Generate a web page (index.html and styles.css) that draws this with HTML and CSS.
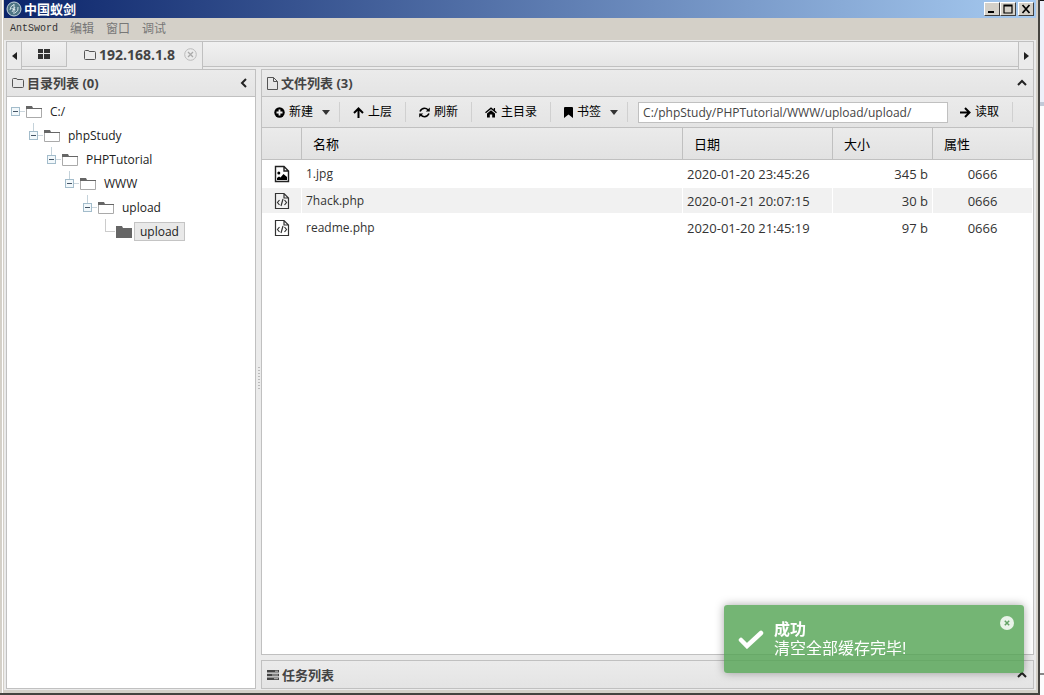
FILE: index.html
```html
<!DOCTYPE html>
<html lang="zh-CN">
<head>
<meta charset="utf-8">
<title>中国蚁剑</title>
<link rel="stylesheet" href="styles.css">
</head>
<body>
<svg class="defs" aria-hidden="true">
  <symbol id="i-folder" viewBox="0 0 12 10"><path d="M.5 8.500v-7q0-1 1-1h2.700q1 0 1 1h5.300q1 0 1 1v6q0 1-1 1h-9q-1 0-1-1z" fill="none" stroke="#555"/></symbol>
  <symbol id="i-dir" viewBox="0 0 16 13"><path d="M.5 12.500v-9h15v9z" fill="#fff" stroke="#aaa"/><path d="M0 4V1h6l1 2h9v1z" fill="#666"/></symbol>
  <symbol id="i-dir-solid" viewBox="0 0 16 13"><path d="M0 13V1h6l1 2h9v10z" fill="#666"/></symbol>
  <symbol id="i-code" viewBox="0 0 16 18"><path d="M1.500 1.500h8.500l4.500 4.500v10.500h-13zM10 1.500V6h4.500" fill="none" stroke="#333" stroke-width="1.200"/><path d="M5.500 8 3.500 10.500l2 2.500M10.500 8l2 2.500-2 2.500M9 7l-2 7" fill="none" stroke="#333" stroke-width="1.200"/></symbol>
  <symbol id="i-image" viewBox="0 0 16 18"><path d="M1.500 1.500h8.500l4.500 4.500v10.500h-13zM10 1.500V6h4.500" fill="none" stroke="#222" stroke-width="1.400"/><circle cx="4.800" cy="8" r="1.500"/><path d="M3 15v-2l2-1.500 1.500 1L9.500 9l3.500 3v3z"/></symbol>
</svg>
<div class="desktop">
  <div class="window">
    <header class="titlebar">
      <svg class="logo" viewBox="0 0 16 16"><circle cx="8" cy="8" r="7" fill="#4d7484" stroke="#c6d5dc"/><path d="M4 9q0-4 4-5.500M12 6q1 4-3 6M8 3v10M5.500 7.500l4 1.500M6 11l3-5" fill="none" stroke="#e3edf0" stroke-width=".9"/></svg>
      <h1 class="title">中国蚁剑</h1>
      <button class="winbtn" aria-label="最小化"><svg viewBox="0 0 12 10"><path d="M2 8h6" stroke="#000" stroke-width="2"/></svg></button>
      <button class="winbtn" aria-label="最大化"><svg viewBox="0 0 12 10"><path d="M2 1h8v8H2zM2 2h8" fill="none" stroke="#000" stroke-width="1.200"/></svg></button>
      <button class="winbtn winbtn-close" aria-label="关闭"><svg viewBox="0 0 12 10"><path d="m2.500 1 7 8m0-8-7 8" stroke="#000" stroke-width="1.700"/></svg></button>
    </header>
    <nav class="menu">
      <button class="menu-item menu-latin">AntSword</button>
      <button class="menu-item">编辑</button>
      <button class="menu-item">窗口</button>
      <button class="menu-item">调试</button>
    </nav>
    <div class="app">
      <div class="tabs">
        <button class="tab-scroll" aria-label="向左"><svg width="5" height="8" viewBox="0 0 5 8"><path d="M5 0v8L0 4z" fill="#222"/></svg></button>
        <button class="tab tab-home" aria-label="主页"><svg width="12" height="10" viewBox="0 0 12 10"><path d="M0 0h5v4H0zM6 0h6v4H6zM0 5h5v5H0zM6 5h6v5H6z" fill="#333"/></svg></button>
        <div class="tab tab-active">
          <svg width="12" height="10"><use href="#i-folder"/></svg>
          <span class="tab-name">192.168.1.8</span>
          <button class="tab-close" aria-label="关闭标签"><svg width="13" height="13" viewBox="0 0 13 13"><circle cx="6.500" cy="6.500" r="5.800" fill="none" stroke="#bbb"/><path d="m4 4 5 5m0-5-5 5" stroke="#aaa" stroke-width="1.300"/></svg></button>
        </div>
        <div class="tab-rest"></div>
        <button class="tab-scroll tab-scroll-right" aria-label="向右"><svg width="5" height="8" viewBox="0 0 5 8"><path d="M0 0v8l5-4z" fill="#222"/></svg></button>
      </div>
      <div class="panes">
        <aside class="pane tree-pane">
          <div class="pane-head">
            <svg width="12" height="10"><use href="#i-folder"/></svg>
            <h2 class="pane-title">目录列表 (0)</h2>
            <button class="collapse" aria-label="折叠"><svg width="8" height="10" viewBox="0 0 8 10"><path d="M6 1 2 5l4 4" fill="none" stroke="#222" stroke-width="2"/></svg></button>
          </div>
          <ul class="tree">
            <li><div class="node"><button class="toggle" aria-label="折叠"></button><svg width="16" height="13"><use href="#i-dir"/></svg><span class="label">C:/</span></div>
              <ul><li><div class="node child"><button class="toggle" aria-label="折叠"></button><svg width="16" height="13"><use href="#i-dir"/></svg><span class="label">phpStudy</span></div>
                <ul><li><div class="node child"><button class="toggle" aria-label="折叠"></button><svg width="16" height="13"><use href="#i-dir"/></svg><span class="label">PHPTutorial</span></div>
                  <ul><li><div class="node child"><button class="toggle" aria-label="折叠"></button><svg width="16" height="13"><use href="#i-dir"/></svg><span class="label">WWW</span></div>
                    <ul><li><div class="node child"><button class="toggle" aria-label="折叠"></button><svg width="16" height="13"><use href="#i-dir"/></svg><span class="label">upload</span></div>
                      <ul><li><div class="node child leaf"><span class="elbow"></span><svg width="16" height="13"><use href="#i-dir-solid"/></svg><span class="label selected">upload</span></div></li></ul>
                    </li></ul>
                  </li></ul>
                </li></ul>
              </li></ul>
            </li>
          </ul>
        </aside>
        <div class="splitter"><span class="grip"></span></div>
        <main class="right">
          <section class="pane file-pane">
            <div class="pane-head">
              <svg width="11" height="13" viewBox="0 0 11 13"><path d="M.5.5h6l4 4v8H.5zM6.500.5v4h4" fill="none" stroke="#555"/></svg>
              <h2 class="pane-title">文件列表 (3)</h2>
              <button class="collapse" aria-label="折叠"><svg width="10" height="8" viewBox="0 0 10 8"><path d="m1 6 4-4 4 4" fill="none" stroke="#222" stroke-width="2"/></svg></button>
            </div>
            <div class="toolbar">
              <button class="tool"><svg width="11" height="11" viewBox="0 0 11 11"><circle cx="5.500" cy="5.500" r="5.200"/><path d="M5.500 2.500v6M2.500 5.500h6" stroke="#eee" stroke-width="1.800"/></svg>新建<span class="caret"></span></button>
              <button class="tool"><svg width="11" height="11" viewBox="0 0 11 11"><path d="M5.500 11V2M1 6l4.500-4.500L10 6" fill="none" stroke="#000" stroke-width="2"/></svg>上层</button>
              <button class="tool"><svg width="11" height="11" viewBox="0 0 11 11"><path d="M1 4.500q1.500-3.200 4.500-3.200 2 0 3.700 1.700M10 6.500Q8.500 9.700 5.500 9.700q-2 0-3.700-1.700" fill="none" stroke="#000" stroke-width="1.600"/><path d="M10.800.5v4h-4zM.2 10.500v-4h4z"/></svg>刷新</button>
              <button class="tool"><svg width="12" height="11" viewBox="0 0 12 11"><path d="m.5 5.800 5.500-4.600 5.500 4.600M9.400 1v3" fill="none" stroke="#000" stroke-width="1.300"/><path d="M2 6.500 6 3.200l4 3.300V10.500H7.200v-3H4.800v3H2z"/></svg>主目录</button>
              <button class="tool"><svg width="9" height="11" viewBox="0 0 9 11"><path d="M0 1q0-1 1-1h7q1 0 1 1v10L4.500 7.500 0 11z"/></svg>书签<span class="caret"></span></button>
              <input class="path" type="text" aria-label="路径" value="C:/phpStudy/PHPTutorial/WWW/upload/upload/">
              <button class="tool"><svg width="11" height="11" viewBox="0 0 11 11"><path d="M0 5.500h9M5 1l4.500 4.500L5 10" fill="none" stroke="#000" stroke-width="2"/></svg>读取</button>
            </div>
            <table class="files">
              <colgroup><col class="c-icon"><col><col class="c-date"><col class="c-size"><col class="c-attr"></colgroup>
              <thead><tr><th></th><th>名称</th><th>日期</th><th>大小</th><th>属性</th></tr></thead>
              <tbody>
                <tr><td class="icon"><svg width="16" height="18"><use href="#i-image"/></svg></td><td class="name">1.jpg</td><td>2020-01-20 23:45:26</td><td class="num">345 b</td><td class="mid">0666</td></tr>
                <tr><td class="icon"><svg width="16" height="18"><use href="#i-code"/></svg></td><td class="name">7hack.php</td><td>2020-01-21 20:07:15</td><td class="num">30 b</td><td class="mid">0666</td></tr>
                <tr><td class="icon"><svg width="16" height="18"><use href="#i-code"/></svg></td><td class="name">readme.php</td><td>2020-01-20 21:45:19</td><td class="num">97 b</td><td class="mid">0666</td></tr>
              </tbody>
            </table>
          </section>
          <section class="pane task-pane">
            <div class="pane-head">
              <svg width="12" height="10" viewBox="0 0 12 10"><path d="M0 0h12v2.500H0zM0 3.700h12v2.600H0zM0 7.500h12V10H0z" fill="#444"/><path d="M8 1.200h3M5 5h6M7 8.700h4" stroke="#bbb"/></svg>
              <h2 class="pane-title">任务列表</h2>
              <button class="collapse" aria-label="展开"><svg width="10" height="8" viewBox="0 0 10 8"><path d="m1 6 4-4 4 4" fill="none" stroke="#222" stroke-width="2"/></svg></button>
            </div>
          </section>
        </main>
      </div>
    </div>
  </div>
  <div class="outside"><div class="outside-top"></div><div class="outside-mid"></div><div class="outside-low"></div></div>
</div>
<div class="toast" role="status">
  <svg class="toast-check" width="26" height="20" viewBox="0 0 26 20"><path d="m3 11 6 6L23 4" fill="none" stroke="#fff" stroke-width="4.500" stroke-linecap="round"/></svg>
  <div class="toast-text"><strong>成功</strong><span>清空全部缓存完毕!</span></div>
  <button class="toast-close" aria-label="关闭"><svg width="14" height="14" viewBox="0 0 14 14"><circle cx="7" cy="7" r="7" fill="#e9f3e9"/><path d="m4.800 4.800 4.400 4.400m0-4.400L4.800 9.200" stroke="#63a266" stroke-width="1.500"/></svg></button>
</div>
</body>
</html>
```
FILE: styles.css
```css
* { box-sizing: border-box; }
html, body { height: 100%; margin: 0; }
body {
  font: 13px/18px "Open Sans", "Noto Sans CJK SC", sans-serif;
  color: #333;
  overflow: hidden;
}
button {
  margin: 0; padding: 0; border: 0; background: none;
  font: inherit; color: inherit;
  display: flex; align-items: center; justify-content: center;
}
h1, h2, ul { margin: 0; padding: 0; }
ul { list-style: none; }
svg { flex: none; display: block; }
.defs { position: absolute; width: 0; height: 0; }

.desktop { display: flex; height: 100vh; background: #fff; }
.window {
  flex: 1; min-width: 0;
  display: flex; flex-direction: column;
  background: #d4d0c8;
  border-right: 2px solid #45433f;
  border-bottom: 2px solid #45433f;
  padding: 0 2px 3px 4px;
  box-shadow: inset 2px 0 #d4d0c8, inset 3px 0 #fff;
}
.outside { width: 4px; display: flex; flex-direction: column; background: #fcfcfd; }
.outside-top { height: 102px; background: #eef0fa; border-top: 1px solid #111; }
.outside-mid { height: 573px; border-top: 4px solid #c3cad8; border-bottom: 2px solid #888; }
.outside-low { flex: 1; }

.titlebar {
  display: flex; align-items: center; height: 18px; padding: 0 2px;
  background: linear-gradient(90deg, #0b246a, #a6caf0);
}
.logo { width: 16px; height: 16px; }
.title { flex: 1; margin-left: 2px; font-size: 13px; line-height: 18px; font-weight: 700; color: #fff; }
.winbtn {
  width: 16px; height: 14px; background: #d4d0c8;
  border: 1px solid; border-color: #fff #404040 #404040 #fff;
}
.winbtn svg { width: 12px; height: 10px; }
.winbtn-close { margin-left: 2px; }

.menu { display: flex; gap: 12px; height: 22px; padding: 0 6px; }
.menu-item { font-size: 12px; color: #777; }
.menu-latin { font-family: "Liberation Mono", monospace; font-size: 10px; color: #333; }

.app {
  flex: 1; min-height: 0; display: flex; flex-direction: column;
  padding: 1px 2px;
  background: #ebebeb;
}
.tabs { display: flex; height: 28px; border: 1px solid #c0c0c0; border-bottom: 0; background: #ebebeb; }
.tab-scroll { width: 15px; border-right: 1px solid #c0c0c0; }
.tab-scroll-right { border-right: 0; border-left: 1px solid #c0c0c0; }
.tab, .tab-rest { background: linear-gradient(#f1f1f1, #e5e5e5); }
.tab { border-right: 1px solid #c0c0c0; }
.tab-home { width: 45px; height: 25px; border-bottom: 1px solid #c0c0c0; }
.tab-active { display: flex; align-items: center; width: 136px; padding: 0 5px 2px 17px; background: #ebebeb; }
.tab-name { flex: 1; margin-left: 3px; font-weight: 700; font-size: 14px; color: #444; }
.tab-rest { flex: 1; height: 25px; border-bottom: 1px solid #c0c0c0; }

.panes { flex: 1; min-height: 0; display: flex; }
.pane { border: 1px solid #c0c0c0; background: #fff; }
.pane-head {
  display: flex; align-items: center; gap: 3px; height: 27px; padding: 0 5px;
  background: linear-gradient(#ebebeb, #e4e4e4);
}
.pane-title { flex: 1; font-size: 13px; line-height: 18px; font-weight: 700; color: #444; }
.collapse { width: 12px; height: 12px; }

.tree-pane { width: 250px; }
.tree-pane .pane-head, .file-pane .pane-head { border-bottom: 1px solid #c0c0c0; }
.tree { padding: 2px 4px; }
.tree ul { padding-left: 18px; }
.node { display: flex; align-items: center; height: 24px; font-size: 12px; color: #222; position: relative; }
.toggle { width: 9px; height: 9px; border: 1px solid #a3bccb; background: #f2f8fb; position: relative; }
.toggle::before { content: ""; width: 5px; height: 1px; background: #456; }
.toggle::after { content: ""; position: absolute; left: 8px; top: 3px; width: 5px; height: 1px; background: #cbd6dd; }
.node svg { margin-left: 6px; }
.label { margin-left: 2px; padding: 0 5px; line-height: 17px; border: 1px solid transparent; }
.selected { background: #e9e9e9; border-color: #c4c4c4; }
.child::before { content: ""; position: absolute; left: 4px; top: 0; width: 1px; height: 8px; background: #c4d2da; }
.leaf::before { height: 12px; background: #ccc; }
.elbow { width: 14px; height: 1px; margin-right: -5px; background: linear-gradient(90deg, transparent 4px, #ccc 4px); }

.splitter { width: 5px; display: flex; align-items: center; justify-content: center; background: #ebebeb; }
.grip { width: 2px; height: 24px; background: repeating-linear-gradient(#bbb 0 1px, #ebebeb 1px 3px); }

.right { flex: 1; min-width: 0; display: flex; flex-direction: column; gap: 5px; }
.file-pane { flex: 1; }

.toolbar {
  display: flex; align-items: center; height: 31px;
  background: linear-gradient(#ebebeb, #e4e4e4); border-bottom: 1px solid #c0c0c0;
}
.tool {
  height: 20px; padding: 0 13px 0 12px; gap: 4px; white-space: nowrap;
  border-right: 1px solid #d0d0d0; font-size: 12px; color: #000;
}
.caret { margin: 0 -4px 0 5px; border: 4px solid transparent; border-top: 5px solid #333; border-bottom: 0; }
.tool + .tool { padding-left: 13px; }
.path {
  flex: 1; min-width: 0; height: 21px; margin-left: 10px; padding: 0 4px;
  border: 1px solid #c0c0c0; background: #fff;
  font: 12px/19px "Open Sans", sans-serif; color: #444;
}
.path + .tool { margin-right: 20px; }

.files { width: 100%; table-layout: fixed; border-collapse: separate; border-spacing: 0; }
.c-icon { width: 40px; }
.c-date { width: 150px; }
.c-size, .c-attr { width: 100px; }
.files th {
  height: 32px; padding: 0 11px; text-align: left; font-weight: 400; color: #000;
  background: linear-gradient(#ebebeb, #e2e2e2);
  border-right: 1px solid #c0c0c0; border-bottom: 1px solid #c0c0c0;
}
.files td { height: 27px; padding: 0 4px; border: 1px solid #fff; border-left: 0; }
.files tbody tr:nth-child(even) td { background: #f1f1f1; }
.files .name { font-size: 12px; }
.icon svg { margin: 0 auto; }
.files .num { text-align: right; }
.files .mid { text-align: center; }

.toast {
  position: fixed; right: 20px; bottom: 22px; width: 300px; height: 68px;
  display: flex; align-items: center; padding: 0 10px 0 14px;
  background: rgba(81, 163, 81, 0.8); border-radius: 3px;
  box-shadow: 0 0 10px rgba(0, 0, 0, 0.35); color: #fff;
}
.toast-text {
  flex: 1; margin-left: 10px; display: flex; flex-direction: column;
  font: 16px/19px "Liberation Sans", "Noto Sans CJK SC", sans-serif;
}
.toast-close { align-self: flex-start; margin-top: 11px; }
```
